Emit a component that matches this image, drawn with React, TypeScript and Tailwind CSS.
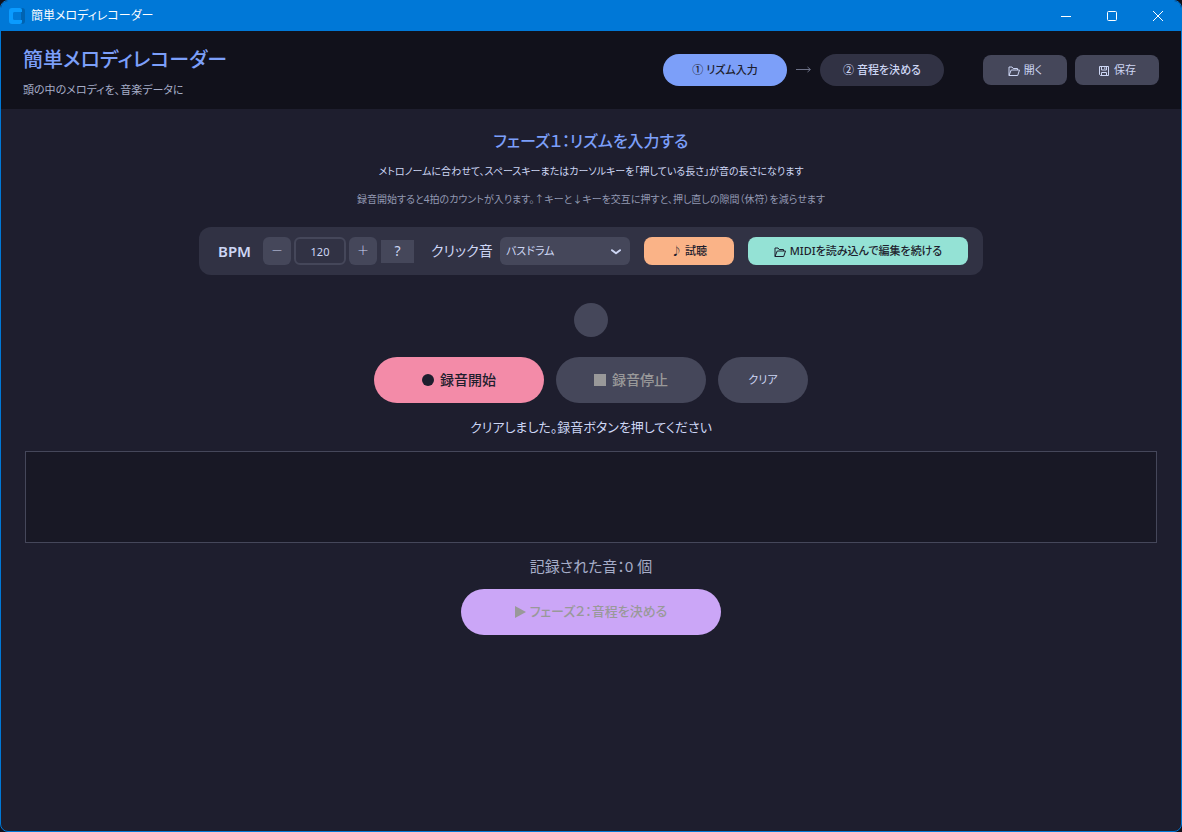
import type { ButtonHTMLAttributes, ReactNode } from 'react'
import { clsx } from 'clsx'

function FolderIcon({ className = '' }: { className?: string }) {
  return (
    <svg
      viewBox="0 0 12 12"
      className={clsx('mt-0.5 size-3 shrink-0', className)}
      fill="none"
      stroke="currentColor"
      strokeLinejoin="round"
      aria-hidden="true"
    >
      <path d="M1 10.5v-8.500h3l1.200 1.500h4.300v1.500" />
      <path d="M1 10.500l2.200-5.500h8.300l-1.800 5.500z" />
    </svg>
  )
}

function SaveIcon() {
  return (
    <svg
      viewBox="0 0 12 12"
      className="mt-0.5 size-3 shrink-0"
      fill="none"
      stroke="currentColor"
      aria-hidden="true"
    >
      <path d="M1.5 1.5h9v9h-8l-1-1z" />
      <path d="M3.5 1.5v3.5h5v-3.5M3.5 10.5v-3h5v3M6.8 2.2v1.8" />
    </svg>
  )
}

function AppLogo() {
  return (
    <svg viewBox="0 0 16 16" className="size-4" aria-hidden="true">
      <path d="M10 0h3a3 3 0 0 1 3 3v10a3 3 0 0 1-3 3h-3z" fill="#0063b1" />
      <path
        d="M3 0h8a2 2 0 0 1 2 2v2H6a2 2 0 0 0-2 2v4a2 2 0 0 0 2 2h7v2a2 2 0 0 1-2 2H3a3 3 0 0 1-3-3V3a3 3 0 0 1 3-3z"
        fill="#0a9bff"
      />
      <path d="M6 4h6v8H6a2 2 0 0 1-2-2V6a2 2 0 0 1 2-2z" fill="#0078d7" />
    </svg>
  )
}

function WindowButton({ label, children }: { label: string; children: ReactNode }) {
  return (
    <button
      type="button"
      aria-label={label}
      className="flex h-full w-[46px] items-center justify-center hover:bg-white/10"
    >
      <svg
        viewBox="0 0 12 12"
        className="size-3"
        fill="none"
        stroke="currentColor"
        aria-hidden="true"
      >
        {children}
      </svg>
    </button>
  )
}

function Button({ className = '', ...props }: ButtonHTMLAttributes<HTMLButtonElement>) {
  return (
    <button
      type="button"
      className={clsx(
        'flex shrink-0 items-center justify-center gap-1 whitespace-nowrap',
        className,
      )}
      {...props}
    />
  )
}

function TitleBar() {
  return (
    <div className="flex h-[30px] items-center bg-[#0078d7] pl-2 text-white">
      <AppLogo />
      <span className="ml-1.5 grow text-xs">簡単メロディレコーダー</span>
      <WindowButton label="最小化">
        <path d="M1 6.5h10" />
      </WindowButton>
      <WindowButton label="最大化">
        <rect x="1.5" y="1.5" width="9" height="9" rx="1" />
      </WindowButton>
      <WindowButton label="閉じる">
        <path d="M1 1l10 10M11 1L1 11" />
      </WindowButton>
    </div>
  )
}

function Header() {
  return (
    <header className="flex h-[78px] items-center bg-[#11111b] px-[22px]">
      <div className="grow">
        <h1 className="text-xl leading-10 font-medium text-[#7c9ff9]">
          簡単メロディレコーダー
        </h1>
        <p className="text-[11px] leading-5 text-[#a6adc8]">
          頭の中のメロディを、音楽データに
        </p>
      </div>
      <nav className="flex items-center text-[11px] font-medium">
        <Button className="h-8 w-31 rounded-full bg-[#7c9ff9] text-[#1e1e2e]">
          ① リズム入力
        </Button>
        <svg
          viewBox="0 0 33 10"
          className="h-[10px] w-[33px] text-[#6c7086]"
          fill="none"
          stroke="currentColor"
          aria-hidden="true"
        >
          <path d="M9 4.5h14M20.5 2l3 2.5l-3 2.5" />
        </svg>
        <Button className="h-8 w-31 rounded-full bg-[#313244] text-[#cdd6f4]">
          ② 音程を決める
        </Button>
      </nav>
      <div className="ml-[39px] flex gap-2 text-[11px] text-[#cdd6f4]">
        <Button className="h-[30px] w-21 rounded-lg bg-[#45475a]">
          <FolderIcon />
          開く
        </Button>
        <Button className="h-[30px] w-21 rounded-lg bg-[#45475a]">
          <SaveIcon />
          保存
        </Button>
      </div>
    </header>
  )
}

function Toolbar() {
  return (
    <div className="mt-3.5 flex h-12 items-center rounded-xl bg-[#313244] pr-[15px] pl-[19px] text-[#cdd6f4]">
      <label htmlFor="bpm" className="w-[45px] text-[15px] font-semibold">
        BPM
      </label>
      <Button
        aria-label="BPMを下げる"
        className="size-7 rounded-md bg-[#45475a] text-xs font-light"
      >
        －
      </Button>
      <input
        id="bpm"
        defaultValue="120"
        className="mx-[3px] h-7 w-13 rounded-md border-2 border-[#45475a] bg-transparent text-center text-[11px]"
      />
      <Button
        aria-label="BPMを上げる"
        className="size-7 rounded-md bg-[#45475a] text-xs font-light"
      >
        ＋
      </Button>
      <Button className="ml-1 h-[23px] w-[33px] bg-[#45475a] text-sm">?</Button>
      <label htmlFor="click" className="ml-[17px] w-[69px] text-sm whitespace-nowrap">
        クリック音
      </label>
      <div className="relative">
        <select
          id="click"
          className="h-7 w-[130px] appearance-none rounded-md bg-[#45475a] pl-1.5 text-[11px]"
        >
          <option>バスドラム</option>
        </select>
        <svg
          viewBox="0 0 10 6"
          className="pointer-events-none absolute top-[12px] right-[9px] h-[6px] w-[10px]"
          fill="none"
          stroke="currentColor"
          strokeWidth="2"
          strokeLinecap="round"
          strokeLinejoin="round"
          aria-hidden="true"
        >
          <path d="M1 1.2l4 3l4-3" />
        </svg>
      </div>
      <Button className="ml-[14px] h-7 w-[90px] rounded-lg bg-[#fab387] text-[11px] font-medium text-[#1e1e2e]">
        ♪ 試聴
      </Button>
      <Button className="ml-[14px] h-7 w-[220px] rounded-lg bg-[#94e2d5] text-[11px] font-medium text-[#1e1e2e]">
        <FolderIcon />
        MIDIを読み込んで編集を続ける
      </Button>
    </div>
  )
}

export default function App() {
  return (
    <div className="min-h-screen bg-[#11111b] font-['Noto_Sans','Noto_Sans_CJK_JP',sans-serif] [font-feature-settings:'palt']">
      <div className="flex min-h-screen flex-col overflow-hidden rounded-lg border border-[#0078d7] bg-[#1e1e2e]">
        <TitleBar />
        <Header />
        <main className="flex flex-col items-center px-6 pt-4 text-[#cdd6f4]">
          <h2 className="text-base leading-8 font-medium text-[#7c9ff9]">
            フェーズ１：リズムを入力する
          </h2>
          <p className="text-[10px] leading-7">
            メトロノームに合わせて、スペースキーまたはカーソルキーを「押している長さ」が音の長さになります
          </p>
          <p className="text-[10px] leading-7 text-[#9399b2]">
            録音開始すると4拍のカウントが入ります。↑キーと↓キーを交互に押すと、押し直しの隙間（休符）を減らせます
          </p>
          <Toolbar />
          <div className="mt-7 size-[34px] rounded-full bg-[#45475a]" />
          <div className="mt-5 flex gap-3">
            <Button className="h-[46px] w-[170px] rounded-full bg-[#f38ba8] text-sm font-medium text-[#1e1e2e]">
              <span className="mr-0.5 size-3 rounded-full bg-current" />
              録音開始
            </Button>
            <Button
              disabled
              className="h-[46px] w-[150px] rounded-full bg-[#45475a] text-sm font-medium text-[#999999]"
            >
              <span className="mr-0.5 size-3 bg-current" />
              録音停止
            </Button>
            <Button className="h-[46px] w-[90px] rounded-full bg-[#45475a] text-[11px]">
              クリア
            </Button>
          </div>
          <p role="status" className="text-[13px] leading-12">
            クリアしました。録音ボタンを押してください
          </p>
          <div className="h-[92px] w-full border border-[#45475a] bg-[#181825]" />
          <p className="text-[15px] leading-[46px] text-[#a6adc8]">記録された音：0 個</p>
          <Button
            disabled
            className="h-[46px] w-[260px] rounded-full bg-[#cba6f7] text-[13px] font-medium text-[#999999]"
          >
            <svg viewBox="0 0 11 12" className="h-3 w-[11px]" fill="currentColor" aria-hidden="true">
              <path d="M0 0l11 6l-11 6z" />
            </svg>
            フェーズ２：音程を決める
          </Button>
        </main>
      </div>
    </div>
  )
}
